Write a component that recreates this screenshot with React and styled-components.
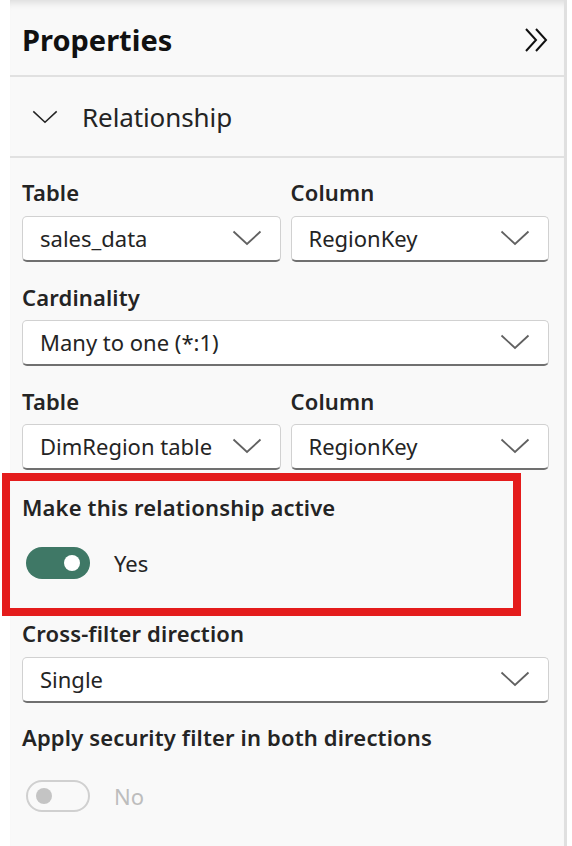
import styled, { createGlobalStyle } from "styled-components";

const GlobalStyle = createGlobalStyle`
  html, body {
    margin: 0;
    padding: 0;
    background: #ffffff;
  }
  body {
    font-family: "Noto Sans", "Open Sans", sans-serif;
    color: #242424;
  }
`;

const Panel = styled.div`
  margin-left: 10px;
  width: 557px;
  min-height: 846px;
  box-sizing: border-box;
  background: #f9f9f9;
  border-right: 3px solid #e0e0e0;
  box-shadow: inset 0 9px 8px -7px rgba(0, 0, 0, 0.14);
`;

const Header = styled.div`
  height: 77px;
  display: flex;
  align-items: center;
  justify-content: space-between;
  padding: 4px 14px 0 12px;
  box-sizing: border-box;
  border-bottom: 2px solid #e1e1e1;

  h1 {
    margin: 0;
    font-size: 29px;
    font-weight: 700;
    color: #111111;
  }
`;

const Section = styled.div`
  height: 81px;
  display: flex;
  align-items: center;
  gap: 24px;
  padding-left: 22px;
  box-sizing: border-box;
  border-bottom: 2px solid #e1e1e1;

  span {
    font-size: 26px;
    color: #242424;
    letter-spacing: -0.1px;
  }
`;

const Form = styled.div`
  padding: 20px 15px 0 12px;
  display: flex;
  flex-direction: column;
`;

const Row = styled.div`
  display: grid;
  grid-template-columns: 1fr 1fr;
  column-gap: 10px;
  margin-bottom: ${(p) => p.$after || 0}px;
`;

const Field = styled.div`
  display: flex;
  flex-direction: column;
  margin-bottom: ${(p) => p.$after || 0}px;
`;

const Label = styled.div`
  height: 28px;
  line-height: 28px;
  font-size: 22px;
  font-weight: 600;
  letter-spacing: 0.15px;
  color: #242424;
  margin-bottom: ${(p) => p.$gap ?? 10}px;
  white-space: nowrap;
`;

const Select = styled.div`
  height: 46px;
  box-sizing: border-box;
  background: #ffffff;
  border: 1px solid #d1d1d1;
  border-bottom: 2px solid #707070;
  border-radius: 5px;
  display: flex;
  align-items: center;
  justify-content: space-between;
  padding: 0 18px 1px 17px;
  font-size: 22px;
  color: #242424;
  white-space: nowrap;
`;

const Highlight = styled.div`
  margin: 3px 28px 3px -20px;
  border: 8px solid #e41c1c;
  padding: 12px 12px 29px 12px;
  display: flex;
  flex-direction: column;
`;

const ToggleRow = styled.div`
  display: flex;
  align-items: center;
  gap: 24px;
  padding-left: ${(p) => p.$indent || 4}px;
`;

const Track = styled.div`
  width: 64px;
  height: 32px;
  box-sizing: border-box;
  border-radius: 16px;
  position: relative;
  background: ${(p) => (p.$on ? "#3f7866" : "transparent")};
  border: ${(p) => (p.$on ? "none" : "2px solid #d0d0d0")};
`;

const Knob = styled.div`
  position: absolute;
  top: 50%;
  width: 16px;
  height: 16px;
  margin-top: -8px;
  border-radius: 50%;
  background: ${(p) => (p.$on ? "#ffffff" : "#c4c4c4")};
  left: ${(p) => (p.$on ? "38px" : "8px")};
`;

const ToggleText = styled.span`
  font-size: 22px;
  color: ${(p) => (p.$on ? "#242424" : "#bdbdbd")};
`;

function Chevron({ width = 30, height = 16, color = "#616161" }) {
  return (
    <svg width={width} height={height} viewBox="0 0 30 16" fill="none">
      <polyline
        points="1.5,1.5 15,14 28.5,1.5"
        stroke={color}
        strokeWidth="1.8"
        strokeLinejoin="miter"
      />
    </svg>
  );
}

function DoubleChevron() {
  return (
    <svg width="26" height="26" viewBox="0 0 26 26" fill="none">
      <polyline points="2,2 12,13 2,24" stroke="#111" strokeWidth="2" />
      <polyline points="12,2 22,13 12,24" stroke="#111" strokeWidth="2" />
    </svg>
  );
}

function Dropdown({ value }) {
  return (
    <Select>
      <span>{value}</span>
      <Chevron />
    </Select>
  );
}

function Toggle({ on, text, indent }) {
  return (
    <ToggleRow $indent={indent}>
      <Track $on={on}>
        <Knob $on={on} />
      </Track>
      <ToggleText $on={on}>{text}</ToggleText>
    </ToggleRow>
  );
}

export default function App() {
  return (
    <>
      <GlobalStyle />
      <Panel>
        <Header>
          <h1>Properties</h1>
          <DoubleChevron />
        </Header>
        <Section>
          <Chevron width={26} height={14} color="#242424" />
          <span>Relationship</span>
        </Section>
        <Form>
          <Row $after={21}>
            <Field>
              <Label>Table</Label>
              <Dropdown value="sales_data" />
            </Field>
            <Field>
              <Label>Column</Label>
              <Dropdown value="RegionKey" />
            </Field>
          </Row>
          <Field $after={21}>
            <Label $gap={9}>Cardinality</Label>
            <Dropdown value="Many to one (*:1)" />
          </Field>
          <Row>
            <Field>
              <Label $gap={9}>Table</Label>
              <Dropdown value="DimRegion table" />
            </Field>
            <Field>
              <Label $gap={9}>Column</Label>
              <Dropdown value="RegionKey" />
            </Field>
          </Row>
          <Highlight>
            <Label $gap={26}>Make this relationship active</Label>
            <Toggle on text="Yes" indent={4} />
          </Highlight>
          <Field $after={20}>
            <Label $gap={10}>Cross-filter direction</Label>
            <Dropdown value="Single" />
          </Field>
          <Field>
            <Label $gap={29}>Apply security filter in both directions</Label>
            <Toggle on={false} text="No" indent={4} />
          </Field>
        </Form>
      </Panel>
    </>
  );
}
